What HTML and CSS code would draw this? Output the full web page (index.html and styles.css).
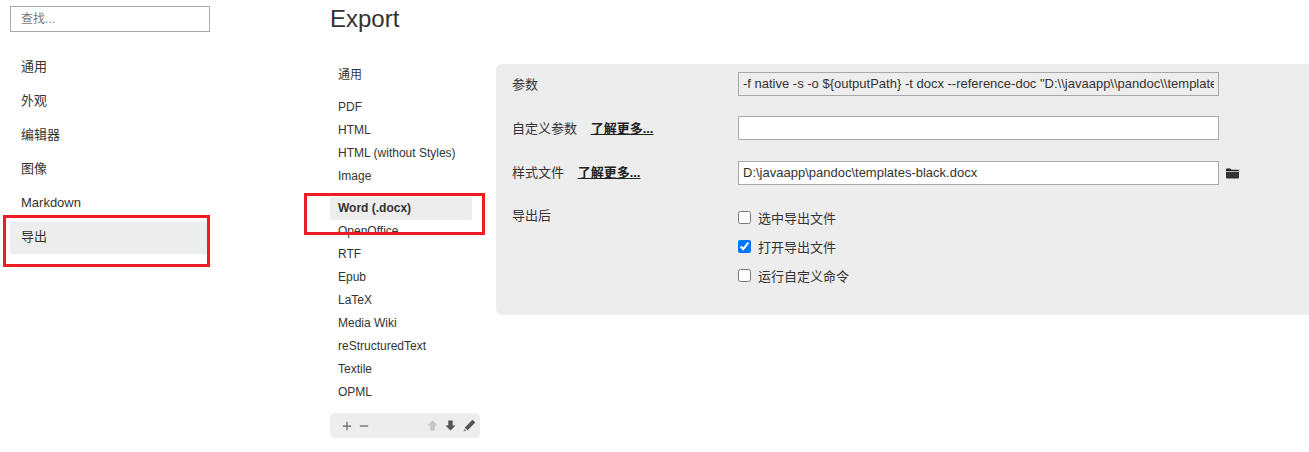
FILE: index.html
```html
<!DOCTYPE html>
<html lang="en">
<head>
    <meta charset="UTF-8">
    <meta name="viewport" content="width=device-width, initial-scale=1.0">
    <title>Export</title>
    <link rel="stylesheet" href="styles.css">
</head>
<body>
    <div class="app">
        <aside class="sidebar">
            <input class="search" type="text" placeholder="查找...">
            <nav class="nav">
                <a class="nav-item">通用</a>
                <a class="nav-item">外观</a>
                <a class="nav-item">编辑器</a>
                <a class="nav-item">图像</a>
                <a class="nav-item">Markdown</a>
                <a class="nav-item active">导出</a>
            </nav>
        </aside>
        <main class="content">
            <h1>Export</h1>
            <div class="columns">
                <div class="formats">
                    <ul class="format-list first">
                        <li>通用</li>
                    </ul>
                    <ul class="format-list">
                        <li>PDF</li>
                        <li>HTML</li>
                        <li>HTML (without Styles)</li>
                        <li>Image</li>
                    </ul>
                    <ul class="format-list">
                        <li class="selected">Word (.docx)</li>
                        <li>OpenOffice</li>
                        <li>RTF</li>
                        <li>Epub</li>
                        <li>LaTeX</li>
                        <li>Media Wiki</li>
                        <li>reStructuredText</li>
                        <li>Textile</li>
                        <li>OPML</li>
                    </ul>
                    <div class="toolbar">
                        <svg class="tool" viewBox="0 0 12 12"><path d="M6 1v10M1 6h10" stroke="#666" stroke-width="1.5" fill="none"/></svg>
                        <svg class="tool" viewBox="0 0 12 12"><path d="M1 6h10" stroke="#666" stroke-width="1.5" fill="none"/></svg>
                        <span class="spacer"></span>
                        <svg class="tool arrow" viewBox="0 0 12 12"><path d="M6 .5 11.500 6H8.400v5.500H3.600V6H.5z" fill="#c4c4c4"/></svg>
                        <svg class="tool arrow" viewBox="0 0 12 12"><path d="M6 11.500.5 6h3.100V.5h4.800V6h3.100z" fill="#555"/></svg>
                        <svg class="tool pencil" viewBox="0 0 13 13"><path d="M9.500.8 12.300 3.600 4.600 11.300 1.800 8.500z" fill="#555"/><path d="M1.400 9.300 3.800 11.700.5 12.600z" fill="#999"/></svg>
                    </div>
                </div>
                <section class="panel">
                    <div class="row">
                        <label class="row-label">参数</label>
                        <input class="field readonly" type="text" readonly value='-f native -s -o ${outputPath} -t docx --reference-doc "D:\\javaapp\\pandoc\\templates-black.docx"'>
                    </div>
                    <div class="row">
                        <label class="row-label">自定义参数 <a class="more">了解更多...</a></label>
                        <input class="field" type="text">
                    </div>
                    <div class="row">
                        <label class="row-label">样式文件 <a class="more">了解更多...</a></label>
                        <input class="field" type="text" value="D:\javaapp\pandoc\templates-black.docx">
                        <svg class="folder" viewBox="0 0 14 11"><path d="M0 1.200C0 .5.5 0 1.200 0h3.400l1.200 1.400h7C13.500 1.400 14 1.900 14 2.600V3H0z" fill="#222"/><path d="M0 3.800h14v6c0 .7-.5 1.200-1.200 1.200H1.200C.5 11 0 10.500 0 9.800z" fill="#333"/></svg>
                    </div>
                    <div class="row checks-row">
                        <label class="row-label">导出后</label>
                        <div class="checks">
                            <label class="check"><input type="checkbox"> 选中导出文件</label>
                            <label class="check"><input type="checkbox" checked> 打开导出文件</label>
                            <label class="check"><input type="checkbox"> 运行自定义命令</label>
                        </div>
                    </div>
                </section>
            </div>
        </main>
    </div>
    <!-- red annotation boxes drawn over the screenshot -->
    <div class="mark mark-nav"></div>
    <div class="mark mark-format"></div>
</body>
</html>
```

FILE: styles.css
```css
* {
    box-sizing: border-box;
}

html, body {
    height: 100%;
    overflow: hidden;
}

body {
    margin: 0;
    background: #fff;
    color: #333;
    font-family: "Liberation Sans", "Noto Sans CJK SC", sans-serif;
    font-size: 13px;
}

.app {
    display: flex;
}

.sidebar {
    width: 200px;
    margin: 6px 120px 0 10px;
    flex: none;
}

.search {
    display: block;
    width: 200px;
    height: 26px;
    padding: 0 10px;
    border: 1px solid #a9a9a9;
    font: inherit;
    font-size: 12px;
    outline: none;
}

.search::placeholder {
    color: #777;
}

.nav {
    margin-top: 20px;
    margin-right: 3px;
    display: flex;
    flex-direction: column;
    gap: 2px;
}

.nav-item {
    height: 32px;
    line-height: 30px;
    padding-left: 11px;
    border-radius: 3px 0 0 3px;
}

.nav-item.active {
    background: #ededed;
}

.content {
    flex: 1;
    min-width: 0;
}

h1 {
    margin: 0;
    height: 39px;
    line-height: 38px;
    font-size: 24px;
    font-weight: 400;
}

.columns {
    display: flex;
    margin-top: 25px;
}

.formats {
    width: 150px;
    margin-right: 16px;
    flex: none;
    font-size: 12px;
}

.format-list {
    list-style: none;
    margin: 0 0 9px;
    padding: 0;
}

.format-list li {
    height: 23px;
    line-height: 23px;
    padding-left: 8px;
    width: 142px;
    border-radius: 2px;
    white-space: nowrap;
}

.format-list li.selected {
    background: #ededed;
    font-weight: 700;
}

.toolbar {
    display: flex;
    align-items: center;
    gap: 7px;
    height: 25px;
    margin-top: 6px;
    padding: 0 4px 0 12px;
    background: #ededed;
    border-radius: 5px;
}

.tool {
    width: 10px;
    height: 10px;
    flex: none;
}

.tool.arrow {
    width: 11px;
    height: 11px;
}

.tool.pencil {
    width: 13px;
    height: 13px;
}

.spacer {
    flex: 1;
}

.panel {
    flex: 1;
    height: 251px;
    padding: 8px 16px;
    background: #ededed;
    border-radius: 6px 0 0 6px;
}

.row {
    display: flex;
    align-items: center;
    height: 24px;
    margin-bottom: 20px;
}

.row + .row + .row {
    margin-top: 21px;
}

.row-label {
    width: 226px;
    flex: none;
    padding-bottom: 2px;
}

.row + .row + .row .row-label {
    padding-bottom: 4px;
}

.more {
    margin-left: 10px;
    font-weight: 700;
    text-decoration: underline;
    color: #222;
}

.field {
    width: 481px;
    height: 24px;
    padding: 0 4px 1px;
    border: 1px solid #a9a9a9;
    background: #fff;
    color: #333;
    font: inherit;
    outline: none;
}

.field.readonly {
    background: #ededed;
}

.folder {
    width: 13px;
    height: 11px;
    margin-left: 7px;
}

.row + .row + .row.checks-row {
    align-items: flex-start;
    height: auto;
    margin-top: 0;
    margin-bottom: 0;
}

.row + .row + .row.checks-row .row-label {
    padding-bottom: 0;
}

.checks {
    display: flex;
    flex-direction: column;
    gap: 9px;
    padding-top: 2px;
}

.check {
    display: flex;
    align-items: center;
    gap: 7px;
    height: 20px;
}

.check input {
    width: 13px;
    height: 13px;
    margin: 0;
}

.mark {
    position: absolute;
    border: 3px solid #ed1c24;
}

.mark-nav {
    left: 3px;
    top: 215px;
    width: 207px;
    height: 52px;
}

.mark-format {
    left: 304px;
    top: 193px;
    width: 181px;
    height: 42px;
}
```
